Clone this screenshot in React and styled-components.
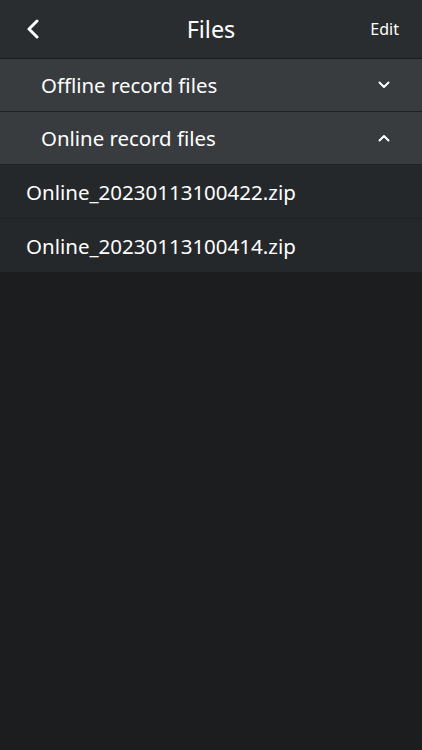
import React from "react";
import styled, { createGlobalStyle } from "styled-components";

const Global = createGlobalStyle`
  html, body { margin: 0; padding: 0; background: #1c1d1f; }
  body { font-family: "Noto Sans", "Open Sans", sans-serif; color: #fff; }
  #root { min-height: 750px; background: #1c1d1f; }
`;

const Page = styled.div`
  width: 422px;
  min-height: 750px;
  display: flex;
  flex-direction: column;
  background: #1c1d1f;
`;

const Header = styled.header`
  height: 58px;
  display: grid;
  grid-template-columns: 80px 1fr 80px;
  align-items: center;
  background: #2a2d30;
  border-bottom: 1px solid #1b1c1e;
`;

const BackButton = styled.button`
  background: none;
  border: 0;
  padding: 0 0 0 26px;
  display: flex;
  align-items: center;
  cursor: pointer;
`;

const Title = styled.h1`
  margin: 0;
  text-align: center;
  font-size: 23.4px;
  font-weight: 400;
`;

const EditButton = styled.button`
  background: none;
  border: 0;
  color: #fff;
  font-family: inherit;
  font-size: 16px;
  justify-self: end;
  padding: 0 23px 0 0;
  cursor: pointer;
`;

const Section = styled.div`
  height: 52px;
  display: flex;
  align-items: center;
  justify-content: space-between;
  padding: 0 32px 0 41px;
  background: #393c3f;
  border-bottom: 1px solid #1f2123;
  font-size: 20.4px;
`;

const FileRow = styled.div`
  height: 53px;
  display: flex;
  align-items: center;
  padding: 0 26px;
  background: #25282b;
  font-size: 20.5px;
  border-bottom: ${(p) => (p.$last ? "none" : "1px solid #1f2124")};
`;

const Chevron = ({ up }) => (
  <svg width="12" height="8" viewBox="0 0 12 8">
    <path
      d={up ? "M1.5 6.5 L6 2 L10.5 6.5" : "M1.5 1.5 L6 6 L10.5 1.5"}
      fill="none"
      stroke="#fff"
      strokeWidth="2"
      strokeLinecap="round"
      strokeLinejoin="round"
    />
  </svg>
);

export default function App() {
  return (
    <>
      <Global />
      <Page>
        <Header>
          <BackButton aria-label="Back">
            <svg width="14" height="20" viewBox="0 0 14 20">
              <path
                d="M11 2 L3 10 L11 18"
                fill="none"
                stroke="#fff"
                strokeWidth="3"
                strokeLinecap="round"
                strokeLinejoin="round"
              />
            </svg>
          </BackButton>
          <Title>Files</Title>
          <EditButton>Edit</EditButton>
        </Header>
        <Section>
          <span>Offline record files</span>
          <Chevron />
        </Section>
        <Section>
          <span>Online record files</span>
          <Chevron up />
        </Section>
        <FileRow>Online_20230113100422.zip</FileRow>
        <FileRow $last>Online_20230113100414.zip</FileRow>
      </Page>
    </>
  );
}
